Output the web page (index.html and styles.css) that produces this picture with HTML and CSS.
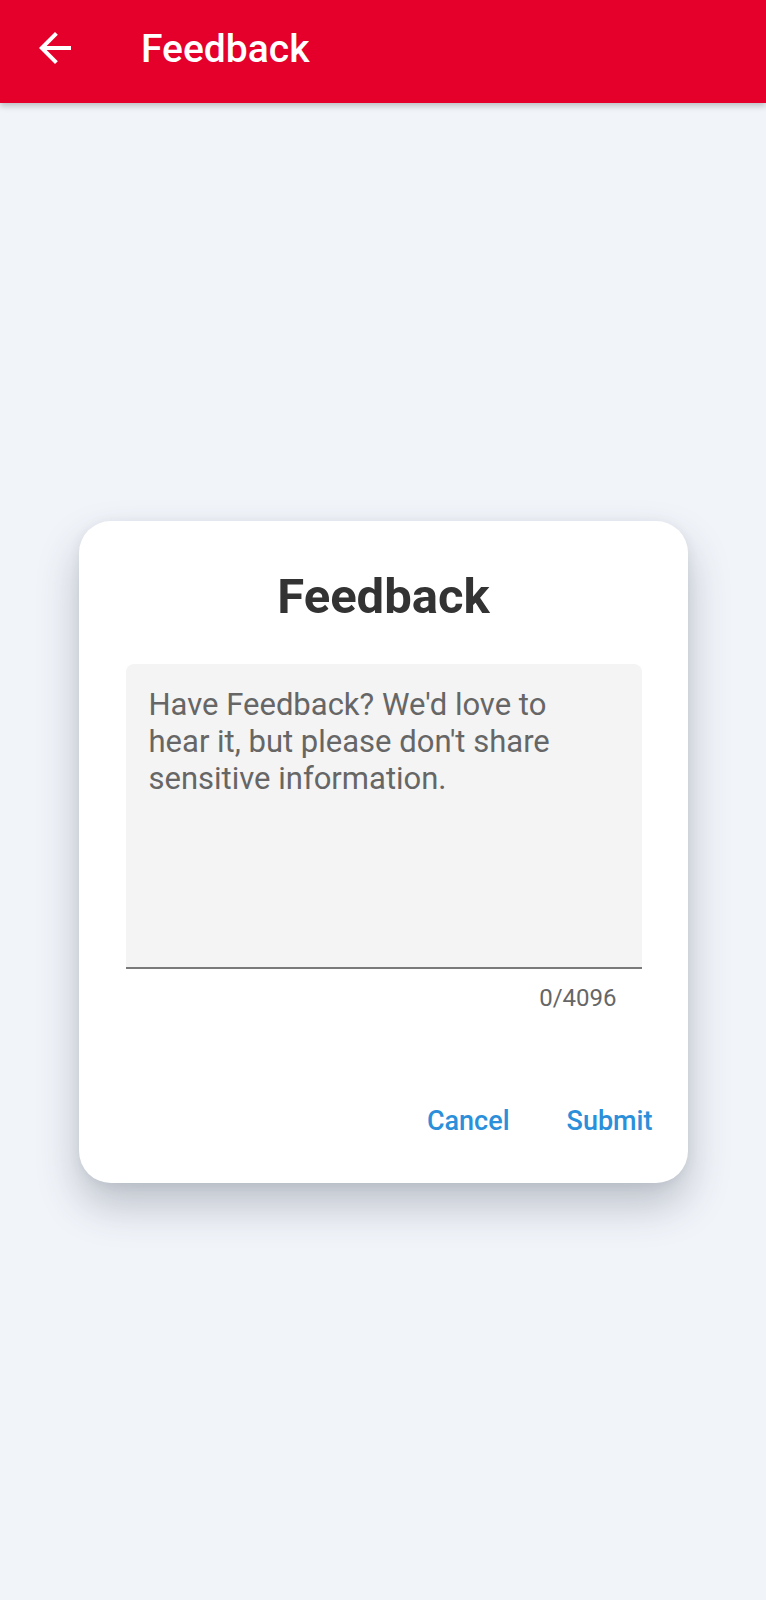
FILE: index.html
```html
<!DOCTYPE html>
<html lang="en">
<head>
<meta charset="utf-8">
<title>Feedback</title>
<link rel="stylesheet" href="styles.css">
</head>
<body>
<header class="appbar">
  <button class="back" aria-label="Back">
    <svg viewBox="0 0 24 24" width="48" height="48"><path d="M20 11H7.83l5.59-5.59L12 4l-8 8 8 8 1.41-1.41L7.83 13H20v-2z" fill="#fff"/></svg>
  </button>
  <h1 class="appbar-title">Feedback</h1>
</header>
<main class="stage">
  <section class="card">
    <h2 class="card-title">Feedback</h2>
    <div class="field">
      <p class="placeholder">Have Feedback? We'd love to hear it, but please don't share sensitive information.</p>
    </div>
    <div class="counter">0/4096</div>
    <div class="actions">
      <button class="action">Cancel</button>
      <button class="action">Submit</button>
    </div>
  </section>
</main>
</body>
</html>
```
FILE: styles.css
```css
* { box-sizing: border-box; }
html, body { margin: 0; padding: 0; }
body {
  background: #f1f4f9;
  font-family: Roboto, "Liberation Sans", sans-serif;
  width: 766px;
  min-height: 1600px;
}
.appbar {
  height: 103px;
  background: #e4002b;
  display: flex;
  align-items: center;
  padding-left: 31px;
  gap: 62px;
  box-shadow: 0 3px 6px rgba(0,0,0,0.22);
  position: relative;
  z-index: 1;
}
.back {
  width: 48px;
  height: 48px;
  padding: 0;
  border: 0;
  background: none;
  display: flex;
  margin-top: -7px;
}
.appbar-title {
  margin: 0;
  color: #fff;
  font-size: 39px;
  font-weight: 500;
  line-height: 46px;
  margin-top: -5px;
}
.stage {
  height: 1497px;
  display: flex;
  align-items: center;
  justify-content: center;
}
.card {
  width: 609px;
  height: 662px;
  background: #fff;
  border-radius: 32px;
  box-shadow: 0 22px 42px rgba(50,60,80,0.28), 0 2px 12px rgba(50,60,80,0.08);
  padding: 47px 46px 46px 47px;
  display: flex;
  flex-direction: column;
}
.card-title {
  margin: 0;
  text-align: center;
  font-size: 49px;
  line-height: 58px;
  font-weight: 700;
  color: #333;
}
.field {
  margin-top: 38px;
  height: 305px;
  background: #f4f4f4;
  border-radius: 8px 8px 0 0;
  border-bottom: 2px solid #7a7a7a;
  padding: 22px 55px 0 23px;
}
.placeholder {
  margin: 0;
  font-size: 31px;
  line-height: 37px;
  color: #666;
}
.counter {
  margin-top: 15px;
  text-align: right;
  padding-right: 25px;
  font-size: 24px;
  line-height: 28px;
  color: #666;
}
.actions {
  margin-top: auto;
  display: flex;
  justify-content: flex-end;
  gap: 57px;
  margin-right: -11px;
}
.action {
  border: 0;
  background: none;
  padding: 0;
  font-family: inherit;
  font-size: 27px;
  line-height: 32px;
  font-weight: 500;
  color: #2b8fda;
}
```
